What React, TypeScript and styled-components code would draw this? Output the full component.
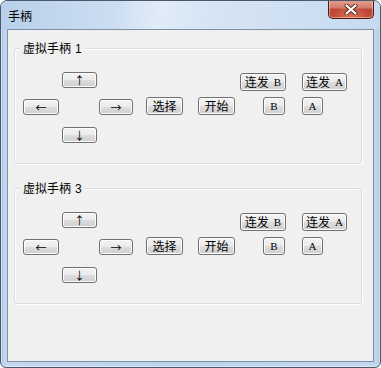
import React from "react";
import styled, { createGlobalStyle } from "styled-components";

const GlobalStyle = createGlobalStyle`
  html, body {
    margin: 0;
    padding: 0;
    background: #ffffff;
  }
  body {
    width: 381px;
    height: 368px;
    overflow: hidden;
    font-family: "Noto Sans CJK SC", "Noto Sans", sans-serif;
  }
  * { box-sizing: border-box; }
`;

const Window = styled.div`
  width: 381px;
  height: 368px;
  border: 1px solid #4b5869;
  border-radius: 7px 7px 6px 6px;
  background: linear-gradient(to right, #a9c6e5 0px, #c3d8ef 4px, #bcd3ec 50%, #c3d8ef calc(100% - 4px), #a9c6e5 100%);
  display: flex;
  flex-direction: column;
  overflow: hidden;
  box-shadow: inset 0 0 0 1px rgba(255, 255, 255, 0.45);
`;

const TitleBar = styled.div`
  height: 28px;
  flex: none;
  display: flex;
  align-items: flex-start;
  justify-content: space-between;
  padding: 0 6px 0 7px;
  background:
    linear-gradient(100deg, rgba(255,255,255,0) 30%, rgba(255,255,255,0.35) 42%, rgba(255,255,255,0) 55%),
    linear-gradient(to right, #b8d0ea 0%, #cfe0f3 35%, #d6e5f5 55%, #c7daef 100%);
`;

const Title = styled.span`
  margin-top: 8px;
  font-size: 12px;
  line-height: 14px;
  color: #000;
  font-family: "Noto Sans CJK SC", sans-serif;
`;

const CloseButton = styled.div`
  width: 46px;
  height: 19px;
  margin-top: -1px;
  border: 1px solid #4a1a12;
  border-top: none;
  border-radius: 0 0 5px 5px;
  background:
    radial-gradient(ellipse at 50% 100%, rgba(240, 140, 110, 0.6) 0%, rgba(240,140,110,0) 60%),
    linear-gradient(to bottom, #e3a396 0%, #d27a6b 45%, #bb4535 50%, #c24a36 100%);
  box-shadow: inset 0 0 0 1px rgba(255, 220, 210, 0.5);
  display: flex;
  align-items: center;
  justify-content: center;
`;

const Client = styled.div`
  flex: 1;
  margin: 0 6px 5px 6px;
  border: 1px solid #7f90a6;
  background: #f0f0f0;
  padding: 18px 0 0 6px;
  display: flex;
  flex-direction: column;
`;

const Group = styled.div<{ $mt: number }>`
  position: relative;
  width: 348px;
  height: 116px;
  margin-top: ${(p) => p.$mt}px;
  border: 1px solid #d5dfe5;
  border-radius: 3px;
  box-shadow: inset 1px 1px 0 #ffffff, 1px 1px 0 #ffffff;
  padding-top: 23px;
  display: flex;
  flex-direction: column;
`;

const Legend = styled.span`
  position: absolute;
  top: -9px;
  left: 5px;
  padding: 0 3px;
  background: #f0f0f0;
  font-size: 12px;
  line-height: 16px;
  color: #000;
  font-family: "Noto Sans CJK SC", sans-serif;
  white-space: pre;
`;

const LegendNum = styled.span`
  margin-left: 4px;
  font-family: "Liberation Sans", sans-serif;
`;

const Row = styled.div<{ $mt: number }>`
  display: flex;
  align-items: flex-start;
  margin-top: ${(p) => p.$mt}px;
`;

const Button = styled.button<{ $w: number; $h: number; $ml: number; $mt: number }>`
  width: ${(p) => p.$w}px;
  height: ${(p) => p.$h}px;
  margin: ${(p) => p.$mt}px 0 0 ${(p) => p.$ml}px;
  padding: 0;
  border: 1px solid #707070;
  border-radius: 3px;
  background: linear-gradient(to bottom, #f2f2f2 0%, #ebebeb 50%, #dddddd 50%, #cfcfcf 100%);
  box-shadow: inset 0 0 0 1px #fcfcfc;
  color: #000;
  font-size: 12px;
  line-height: 14px;
  font-family: "Noto Sans CJK SC", sans-serif;
  white-space: pre;
  display: flex;
  align-items: center;
  justify-content: center;
  cursor: default;
`;

const Latin = styled.span`
  font-family: "Liberation Serif", serif;
  font-size: 11px;
  margin-left: 5px;
  &:first-child { margin-left: 0; }
`;

const Arrow = styled.span`
  font-family: "Noto Sans CJK SC", sans-serif;
  font-size: 11px;
  line-height: 12px;
`;

type Spec = { cjk?: string; latin?: string; arrow?: string; w: number; h: number; ml: number; mt: number };

const rows: { mt: number; items: Spec[] }[] = [
  {
    mt: 0,
    items: [
      { arrow: "↑", w: 35, h: 16, ml: 47, mt: 0 },
      { cjk: "连发", latin: "B", w: 46, h: 18, ml: 143, mt: 1 },
      { cjk: "连发", latin: "A", w: 45, h: 18, ml: 16, mt: 1 },
    ],
  },
  {
    mt: 6,
    items: [
      { arrow: "←", w: 36, h: 16, ml: 8, mt: 2 },
      { arrow: "→", w: 34, h: 16, ml: 40, mt: 2 },
      { cjk: "选择", w: 37, h: 18, ml: 13, mt: 0 },
      { cjk: "开始", w: 37, h: 18, ml: 15, mt: 0 },
      { latin: "B", w: 22, h: 18, ml: 28, mt: 0 },
      { latin: "A", w: 21, h: 18, ml: 17, mt: 0 },
    ],
  },
  {
    mt: 12,
    items: [{ arrow: "↓", w: 35, h: 16, ml: 47, mt: 0 }],
  },
];

const groups = [
  { title: "虚拟手柄", num: "1", mt: 0 },
  { title: "虚拟手柄", num: "3", mt: 24 },
];

function CloseGlyph() {
  return (
    <svg width="14" height="11" viewBox="0 0 14 11">
      <path d="M2.5 1.5 L11.5 9.5 M11.5 1.5 L2.5 9.5" stroke="#5a2a22" strokeWidth="4" strokeLinecap="round" />
      <path d="M2.5 1.5 L11.5 9.5 M11.5 1.5 L2.5 9.5" stroke="#ffffff" strokeWidth="2.2" strokeLinecap="round" />
    </svg>
  );
}

export default function App() {
  return (
    <>
      <GlobalStyle />
      <Window>
        <TitleBar>
          <Title>手柄</Title>
          <CloseButton>
            <CloseGlyph />
          </CloseButton>
        </TitleBar>
        <Client>
          {groups.map((g) => (
            <Group key={g.num} $mt={g.mt}>
              <Legend>
                {g.title}
                <LegendNum>{g.num}</LegendNum>
              </Legend>
              {rows.map((r, ri) => (
                <Row key={ri} $mt={r.mt}>
                  {r.items.map((b, bi) => (
                    <Button key={bi} $w={b.w} $h={b.h} $ml={b.ml} $mt={b.mt}>
                      {b.arrow ? <Arrow>{b.arrow}</Arrow> : null}
                      {b.cjk ? <span>{b.cjk}</span> : null}
                      {b.latin ? <Latin>{b.latin}</Latin> : null}
                    </Button>
                  ))}
                </Row>
              ))}
            </Group>
          ))}
        </Client>
      </Window>
    </>
  );
}
